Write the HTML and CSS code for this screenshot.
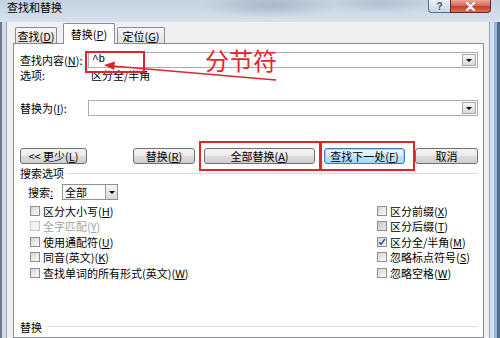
FILE: index.html
```html
<!DOCTYPE html>
<html lang="zh-CN">
<head>
    <meta charset="UTF-8">
    <meta name="viewport" content="width=device-width, initial-scale=1.0">
    <title>查找和替换</title>
    <link rel="stylesheet" href="styles.css">
</head>
<body>
<div class="window">
    <div class="titlebar">
        <span class="title">查找和替换</span>
        <div class="caption">
            <span class="cap-btn cap-help">?</span>
            <span class="cap-btn cap-close">
                <svg width="11" height="9" viewBox="0 0 11 9"><path d="M2 1 L9 8 M9 1 L2 8" stroke="#fff" stroke-width="2.2" stroke-linecap="round"/></svg>
            </span>
        </div>
    </div>

    <div class="frame">
        <div class="frame-left"></div>
        <div class="dialog">
            <div class="tabs">
                <span class="tab tab-find">查找(<u>D</u>)</span>
                <span class="tab tab-replace">替换(<u>P</u>)</span>
                <span class="tab tab-goto">定位(<u>G</u>)</span>
            </div>

            <div class="panel">
                <div class="field">
                    <span class="field-label">查找内容(<u>N</u>):</span>
                    <div class="combo">
                        <span class="combo-text">^b</span>
                        <span class="combo-arrow"></span>
                    </div>
                </div>
                <div class="field-info">
                    <span class="field-label">选项:</span>
                    <span>区分全/半角</span>
                </div>

                <div class="field field-replace">
                    <span class="field-label">替换为(<u>I</u>):</span>
                    <div class="combo">
                        <span class="combo-text"></span>
                        <span class="combo-arrow"></span>
                    </div>
                </div>

                <div class="buttons">
                    <span class="btn btn-less">&lt;&lt; 更少(<u>L</u>)</span>
                    <span class="btn btn-replace">替换(<u>R</u>)</span>
                    <span class="btn btn-all">全部替换(<u>A</u>)</span>
                    <span class="btn btn-next btn-default">查找下一处(<u>F</u>)</span>
                    <span class="btn btn-cancel">取消</span>
                </div>

                <div class="group-title">搜索选项</div>
                <div class="search-row">
                    <span class="search-label">搜索<u>:</u></span>
                    <div class="select">
                        <span class="select-text">全部</span>
                        <span class="select-arrow"></span>
                    </div>
                </div>

                <div class="options">
                    <div class="opt-col opt-col-left">
                        <label class="opt"><span class="check"></span>区分大小写(<u>H</u>)</label>
                        <label class="opt disabled"><span class="check"></span>全字匹配(<u>Y</u>)</label>
                        <label class="opt"><span class="check"></span>使用通配符(<u>U</u>)</label>
                        <label class="opt"><span class="check"></span>同音(英文)(<u>K</u>)</label>
                        <label class="opt"><span class="check"></span>查找单词的所有形式(英文)(<u>W</u>)</label>
                    </div>
                    <div class="opt-col">
                        <label class="opt"><span class="check"></span>区分前缀(<u>X</u>)</label>
                        <label class="opt"><span class="check check-grey"></span>区分后缀(<u>T</u>)</label>
                        <label class="opt"><span class="check">
                            <svg width="8" height="8" viewBox="0 0 8 8"><path d="M1 4.2 L3 6.5 L7 1" fill="none" stroke="#2a4f9c" stroke-width="1.4"/></svg>
                        </span>区分全/半角(<u>M</u>)</label>
                        <label class="opt"><span class="check"></span>忽略标点符号(<u>S</u>)</label>
                        <label class="opt"><span class="check"></span>忽略空格(<u>W</u>)</label>
                    </div>
                </div>

                <div class="group-title group-replace">替换</div>
            </div>
        </div>
        <div class="frame-right"></div>
    </div>

    <!-- 标注 -->
    <div class="mark-box mark-find"></div>
    <div class="mark-box mark-all"></div>
    <div class="mark-box mark-next"></div>
    <span class="mark-label">分节符</span>
    <svg class="mark-arrow" width="180" height="24" viewBox="0 0 180 24">
        <path d="M176 20 L12 6" stroke="#e0242b" stroke-width="1.3" fill="none"/>
        <polygon points="4,5 15,1.5 14,10" fill="#e0242b"/>
    </svg>
</div>
</body>
</html>
```

FILE: styles.css
```css
* {
    box-sizing: border-box;
}
body {
    margin: 0;
    width: 500px;
    height: 338px;
    overflow: hidden;
    font-family: "Noto Sans CJK SC", "Noto Sans", sans-serif;
    font-size: 11px;
    color: #000;
    background: #5f7d99;
}
u {
    text-decoration: underline;
}
.window {
    position: relative;
    display: flex;
    flex-direction: column;
    height: 338px;
}

/* 标题栏 */
.titlebar {
    height: 22px;
    display: flex;
    align-items: flex-start;
    background:
        radial-gradient(ellipse 70px 12px at 270px 6px, rgba(110, 130, 155, 0.35), transparent),
        radial-gradient(ellipse 50px 10px at 380px 4px, rgba(120, 140, 165, 0.25), transparent),
        linear-gradient(#c3d1e0, #d6e1ec);
}
.title {
    padding: 1px 0 0 7px;
    line-height: 13px;
}
.caption {
    margin-left: auto;
    margin-right: 9px;
    display: flex;
}
.cap-btn {
    height: 13px;
    display: flex;
    align-items: center;
    justify-content: center;
    border: 1px solid #5f6f82;
    border-top: none;
}
.cap-help {
    width: 22px;
    border-radius: 0 0 0 4px;
    border-right: none;
    background: linear-gradient(#eef3f8, #c8d5e3);
    color: #455466;
    font-family: "Liberation Sans", sans-serif;
    font-weight: bold;
    font-size: 10px;
}
.cap-close {
    width: 41px;
    border-color: #6a2a20;
    border-radius: 0 0 4px 0;
    background: linear-gradient(#e9a99a 0%, #d36a55 45%, #c4402b 55%, #d9705a 100%);
}

/* 窗框 */
.frame {
    flex: 1;
    display: flex;
    min-height: 0;
}
.frame-left {
    width: 7px;
    background: linear-gradient(90deg, #6c7b8a 0, #6c7b8a 2px, #cfdae6 2px, #cfdae6 6px, #9ea9b5 6px);
}
.frame-right {
    width: 11px;
    background: linear-gradient(90deg, #9aa6b2 0, #9aa6b2 1px, #d3e2f1 1px, #d3e2f1 5px, #93b7da 5px, #93b7da 8px, #4f6e8e 8px);
}
.dialog {
    flex: 1;
    min-height: 0;
    overflow: hidden;
    display: flex;
    flex-direction: column;
    background: #f0f0f0;
    padding: 1px 5px 0 6px;
}

/* 选项卡 */
.tabs {
    position: relative;
    z-index: 1;
    display: flex;
    align-items: flex-end;
    height: 21px;
}
.tab {
    height: 16px;
    margin-bottom: 1px;
    display: flex;
    align-items: center;
    justify-content: center;
    border: 1px solid #898c95;
    border-bottom: none;
    border-radius: 2px 2px 0 0;
    background: linear-gradient(#f6f6f6, #e1e1e1);
}
.tab-find {
    width: 42px;
    margin-left: 2px;
}
.tab-replace {
    width: 52px;
    height: 21px;
    margin-bottom: 0;
    margin-left: 6px;
    background: #fff;
}
.tab-goto {
    width: 48px;
    margin-left: 2px;
}
.panel {
    flex: 1;
    margin-top: -1px;
    border: 1px solid #898c95;
    background: #fff;
    padding: 8px 5px 0 6px;
}

/* 输入行 */
.field {
    display: flex;
    align-items: center;
    height: 16px;
}
.field-label {
    width: 68px;
    flex: none;
}
.field-replace {
    margin-top: 19px;
}
.combo {
    flex: 1;
    height: 16px;
    display: flex;
    border: 1px solid #a7aeb7;
    background: #fff;
}
.combo-text {
    flex: 1;
    padding-left: 3px;
    line-height: 13px;
    font-family: "Liberation Mono", monospace;
    font-size: 11px;
}
.combo-arrow {
    width: 14px;
    margin: 1px;
    display: flex;
    align-items: center;
    justify-content: center;
    border: 1px solid #a9a9a9;
    background: linear-gradient(#f6f6f6, #dadada);
}
.combo-arrow::after,
.select-arrow::after {
    content: "";
    border-left: 3px solid transparent;
    border-right: 3px solid transparent;
    border-top: 3px solid #000;
}
.field-info {
    display: flex;
    height: 12px;
    margin-top: 1px;
    line-height: 12px;
}
.field-info .field-label {
    width: 71px;
}

/* 按钮 */
.buttons {
    display: flex;
    height: 16px;
    margin-top: 32px;
}
.btn {
    height: 16px;
    display: flex;
    align-items: center;
    justify-content: center;
    border: 1px solid #707070;
    border-radius: 3px;
    background: linear-gradient(#f3f3f3 0%, #ebebeb 50%, #dddddd 50%, #cfcfcf 100%);
    line-height: 14px;
}
.btn-default {
    border-color: #3c7fb1;
    background: linear-gradient(#eaf6fd 0%, #d9f0fc 50%, #bee6fd 50%, #a7d9f5 100%);
    box-shadow: inset 0 0 0 1px #9fd4f3;
}
.btn-less { width: 67px; }
.btn-replace { width: 62px; margin-left: 46px; }
.btn-all { width: 111px; margin-left: 9px; }
.btn-next { width: 81px; margin-left: 9px; }
.btn-cancel { width: 63px; margin-left: 10px; }

/* 搜索选项 */
.group-title {
    display: flex;
    align-items: center;
    height: 12px;
    margin-top: 3px;
    line-height: 12px;
}
.group-title::after {
    content: "";
    flex: 1;
    height: 1px;
    margin-left: 4px;
    background: #d9dde2;
}
.group-replace {
    margin-top: 40px;
}
.search-row {
    display: flex;
    align-items: center;
    height: 16px;
    margin-top: 5px;
    padding-left: 8px;
}
.search-label {
    width: 34px;
}
.select {
    width: 56px;
    height: 16px;
    display: flex;
    border: 1px solid #8e8f8f;
    background: #fff;
}
.select-text {
    flex: 1;
    padding-left: 2px;
    line-height: 14px;
}
.select-arrow {
    width: 12px;
    display: flex;
    align-items: center;
    justify-content: center;
    border-left: 1px solid #9a9a9a;
    background: linear-gradient(#f5f5f5, #d8d8d8);
}
.options {
    display: flex;
    margin-top: 3px;
    padding-left: 10px;
}
.opt-col {
    display: flex;
    flex-direction: column;
}
.opt-col-left {
    width: 347px;
}
.opt {
    display: flex;
    align-items: center;
    height: 15.5px;
    white-space: nowrap;
}
.check {
    width: 10px;
    height: 10px;
    flex: none;
    margin-right: 3px;
    display: flex;
    align-items: center;
    justify-content: center;
    border: 1px solid #8f8f8f;
    background: linear-gradient(135deg, #d6d6d6, #fbfbfb);
}
.check-grey {
    background: linear-gradient(135deg, #c8c8c8, #e6e6e6);
}
.opt.disabled {
    color: #a3a3a3;
}
.opt.disabled .check {
    border-color: #c6c6c6;
    background: #f3f3f3;
}

/* 红色标注 */
.mark-box {
    position: absolute;
    border: 2px solid #e0242b;
}
.mark-find {
    left: 85px;
    top: 51px;
    width: 60px;
    height: 22px;
}
.mark-all {
    left: 199px;
    top: 141px;
    width: 122px;
    height: 30px;
}
.mark-next {
    left: 320px;
    top: 141px;
    width: 95px;
    height: 30px;
}
.mark-label {
    position: absolute;
    left: 205px;
    top: 46px;
    font-size: 24px;
    line-height: 28px;
    color: #e5262e;
}
.mark-arrow {
    position: absolute;
    left: 100px;
    top: 60px;
}
```
